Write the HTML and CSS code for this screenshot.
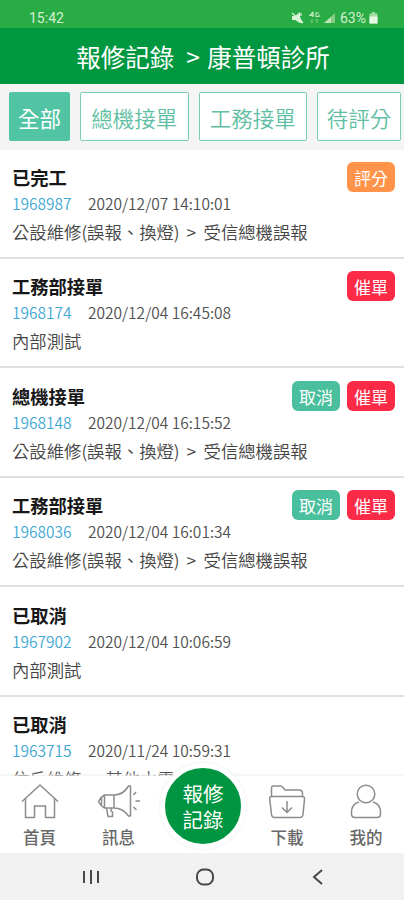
FILE: index.html
```html
<!DOCTYPE html>
<html lang="zh-Hant">
<head>
<meta charset="utf-8">
<title>報修記錄</title>
<link rel="stylesheet" href="styles.css">
</head>
<body>
<div class="app">
  <div class="status">
    <span class="time">15:42</span>
    <svg class="status-icons" width="46" height="14" viewBox="0 0 46 14">
      <path d="M1 5h3l5-4v5l3 6-3 0-5-3H1z" fill="#d8f2d6"/>
      <path d="M1 2l11 10M10 2v3" stroke="#d8f2d6" stroke-width="1.2"/>
      <path d="M22 1l-3 3.500h4M22 1v5M28 2h-3v3.500h3v-2" fill="none" stroke="#c0e8bd" stroke-width="1.200"/>
      <path d="M21 8v4M19.500 10.500l1.500 1.500M26 12V8M24.500 9.500L26 8" fill="none" stroke="#83cb84" stroke-width="1"/>
      <path d="M33 12L44 2v10z" fill="#83cb84"/>
      <path d="M33 12l7-6v6z" fill="#b8e4b6"/>
    </svg>
    <span class="percent">63%</span>
    <svg class="battery" width="9" height="12" viewBox="0 0 9 12"><path d="M3 0h3v1.500h2.500v10h-8v-10H3z" fill="#a5dba4"/><path d="M.5 4.500h8v7h-8z" fill="#e6f7e4"/></svg>
  </div>
  <header class="header"><span>報修記錄</span><span class="gt">&gt;</span><span>康普頓診所</span></header>
  <nav class="tabs">
    <a class="tab active">全部</a><a class="tab wide">總機接單</a><a class="tab wide">工務接單</a><a class="tab mid">待評分</a>
  </nav>
  <main class="list">
    <section class="row">
      <div class="top"><h2>已完工</h2><span class="btn rate">評分</span></div>
      <div class="meta"><span class="num">1968987</span><span class="date">2020/12/07 14:10:01</span></div>
      <p>公設維修(誤報、換燈)<i>&gt;</i>受信總機誤報</p>
    </section>
    <section class="row">
      <div class="top"><h2>工務部接單</h2><span class="btn urge">催單</span></div>
      <div class="meta"><span class="num">1968174</span><span class="date">2020/12/04 16:45:08</span></div>
      <p>內部測試</p>
    </section>
    <section class="row">
      <div class="top"><h2>總機接單</h2><span class="btn cancel">取消</span><span class="btn urge">催單</span></div>
      <div class="meta"><span class="num">1968148</span><span class="date">2020/12/04 16:15:52</span></div>
      <p>公設維修(誤報、換燈)<i>&gt;</i>受信總機誤報</p>
    </section>
    <section class="row">
      <div class="top"><h2>工務部接單</h2><span class="btn cancel">取消</span><span class="btn urge">催單</span></div>
      <div class="meta"><span class="num">1968036</span><span class="date">2020/12/04 16:01:34</span></div>
      <p>公設維修(誤報、換燈)<i>&gt;</i>受信總機誤報</p>
    </section>
    <section class="row">
      <div class="top"><h2>已取消</h2></div>
      <div class="meta"><span class="num">1967902</span><span class="date">2020/12/04 10:06:59</span></div>
      <p>內部測試</p>
    </section>
    <section class="row">
      <div class="top"><h2>已取消</h2></div>
      <div class="meta"><span class="num">1963715</span><span class="date">2020/11/24 10:59:31</span></div>
      <p>住戶維修<i>&gt;</i>其他水電</p>
    </section>
  </main>
  <nav class="bottom">
    <a class="item">
      <svg width="38" height="36" viewBox="0 0 38 36"><path d="M1 17.500L19 1 37 17.500M4.500 14.500V33.500H13.500V22H24.500V33.500H33.500V14.500"/></svg>
      <span>首頁</span>
    </a>
    <a class="item">
      <svg width="44" height="36" viewBox="0 0 44 36"><path d="M7.500 11H17V24H7.500zM7.500 11Q3.500 13 1.500 17.500 3.500 22 7.500 24M4.500 14v7M17 11C23 11 28 8 31.500 2H33.500V32H31.500C28 27 23 24 17 24M9.500 24l1.500 8.500h4.500V28l-1.500-1V24M36.500 11l2.500-3M38.500 17h4.500M36.500 23l3 3"/></svg>
      <span>訊息</span>
    </a>
    <a class="item center"><span class="circle">報修<br>記錄</span></a>
    <a class="item">
      <svg width="38" height="36" viewBox="0 0 38 36"><path d="M3.500 12.500V4Q3.500 2 5.500 2h7q1.500 0 2.500 1.500l2 2.500h14q3.500 0 3.500 3.500v3M3.500 12.500h31q2.200 0 2 2.500L35 30.500q-.3 3-3 3H6.500q-2.700 0-3-3L1.700 15Q1.500 12.500 3.500 12.500zM19 17v11M14 23.500l5 5 5-5"/></svg>
      <span>下載</span>
    </a>
    <a class="item last">
      <svg width="32" height="36" viewBox="0 0 32 36"><circle cx="16" cy="10" r="8.800"/><path d="M9 18C4 19.500 1.500 23 1.500 28v2q0 3.500 3.500 3.500h22q3.500 0 3.500-3.500v-2c0-5-2.500-8.500-7.500-10"/></svg>
      <span>我的</span>
    </a>
  </nav>
  <div class="sysnav">
    <svg width="18" height="18" viewBox="0 0 18 18"><path d="M2 3v12M9 2v14M16 3v12"/></svg>
    <svg width="20" height="18" viewBox="0 0 20 18"><rect x="2" y="1.500" width="16" height="15" rx="6.500"/></svg>
    <svg width="18" height="18" viewBox="0 0 18 18"><path d="M13 2L5 9l8 7"/></svg>
  </div>
</div>
</body>
</html>
```
FILE: styles.css
```css
* { box-sizing: border-box; }
body { margin: 0; font-family: "Noto Sans CJK TC", sans-serif; background: #fff; }
.app { width: 404px; height: 900px; display: flex; flex-direction: column; overflow: hidden; }

.status { height: 28px; flex: none; background: #29ac45; display: flex; align-items: center; padding: 8px 26px 0 29px; color: #d3f0d2; font: 14px/20px Roboto, sans-serif; }
.time { flex: 1; }
.status-icons { margin-right: 3px; }
.percent { width: 28px; white-space: nowrap; }
.battery { margin-left: 1px; }

.header { height: 56px; flex: none; background: #009741; color: #fff; display: flex; justify-content: center; align-items: center; font-size: 24.5px; line-height: 36px; padding: 1px 0 0 2px; }
.gt { width: 33px; padding-left: 12px; }

.tabs { height: 65.6px; flex: none; background: #f4f4f5; display: flex; gap: 10px; padding: 8px 0 0 9px; }
.tab { width: 61px; height: 49px; flex: none; border: 1.500px solid #7bcdb5; border-radius: 2px; background: #fff; color: #60bea3; font-size: 21.5px; line-height: 49px; text-align: center; font-weight: 350; white-space: nowrap; }
.tab.active { background: #50c4a3; border-color: #50c4a3; color: #fff; font-weight: 400; }
.tab.wide { width: 108.500px; }
.tab.mid { width: 84px; }

.list { flex: 1; min-height: 0; overflow: hidden; }
.row { height: 109.450px; border-bottom: 2px solid #e0e0e0; padding: 12.400px 9px 0 12px; }
.row:last-child { border: 0; }
.top { height: 30px; display: flex; gap: 7px; }
h2 { flex: 1; margin: 0; font-size: 18.3px; line-height: 30px; font-weight: 700; color: #171717; }
.btn { width: 48px; height: 30px; border-radius: 6px; color: #fff; font-size: 17px; line-height: 32px; text-align: center; }
.rate { background: #ff934a; }
.urge { background: #fb2b48; }
.cancel { background: #4abf9d; }
.meta { display: flex; height: 25px; font-size: 15.5px; line-height: 23px; color: #505050; font-weight: 350; }
.num { width: 76px; color: #3fa7d2; }
p { margin: 0; font-size: 17.350px; line-height: 30px; color: #454545; font-weight: 350; white-space: nowrap; }
p i { display: inline-block; width: 24px; padding-left: 7px; font-style: normal; }

.bottom { height: 77px; flex: none; display: flex; background: #fff; position: relative; box-shadow: 0 -1px 3px #eee; }
.item { width: 78px; flex: none; display: flex; flex-direction: column; align-items: center; padding-top: 8px; font-size: 16.500px; line-height: 24px; color: #686868; font-weight: 500; }
.item:nth-child(1), .item:nth-child(2) { width: 79px; }
.item.center { width: 90px; padding: 0; }
.item.last { padding-left: 2px; }
.item svg { fill: none; stroke: #8c8c8c; stroke-width: 1.500; stroke-linejoin: round; margin-bottom: 5px; }
.circle { width: 86px; height: 86px; flex: none; border: 5px solid #fff; border-radius: 50%; background: #009540; color: #fff; text-align: center; font-size: 20.500px; line-height: 26px; padding-top: 12px; margin-top: -13px; font-weight: 400; box-shadow: 0 0 3px #e6e6e6; }
.sysnav { height: 47px; flex: none; background: #f1f1f1; display: flex; justify-content: space-between; align-items: center; padding: 1px 77px 0 82px; position: relative; }
.sysnav svg { fill: none; stroke: #484848; stroke-width: 2; }
```
